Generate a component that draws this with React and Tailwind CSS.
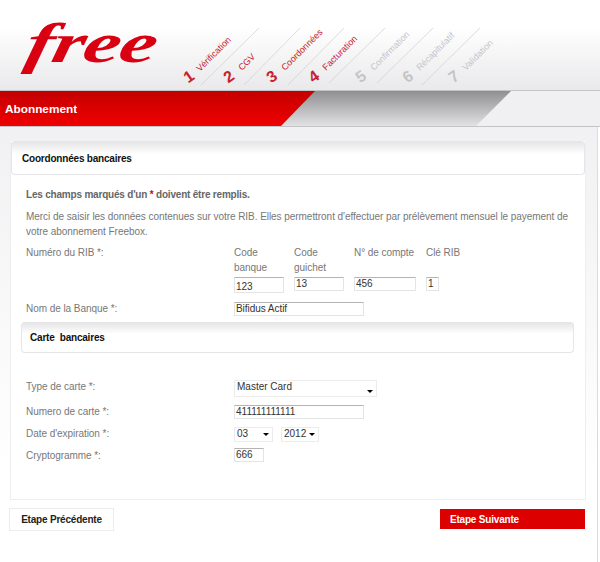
const STEPS = [
  { n: "1", label: "Vérification", x: 192, y: 81, tx: 200, ty: 72, on: true },
  { n: "2", label: "CGV", x: 232, y: 81, tx: 242, ty: 71, on: true },
  { n: "3", label: "Coordonnées", x: 275, y: 81, tx: 285, ty: 71, on: true },
  { n: "4", label: "Facturation", x: 317, y: 81, tx: 326, ty: 71, on: true },
  { n: "5", label: "Confirmation", x: 364, y: 81, tx: 374, ty: 71, on: false },
  { n: "6", label: "Récapitulatif", x: 411, y: 81, tx: 420, ty: 71, on: false },
  { n: "7", label: "Validation", x: 457, y: 81, tx: 466, ty: 71, on: false },
];

const LINES = [[201, 85, 259, 28], [244, 85, 300, 28], [288, 85, 344, 28], [329, 83, 385, 28], [377, 83, 433, 28], [422, 85, 480, 28]];

function Header() {
  return (
    <div className="relative h-[90px] bg-gradient-to-b from-white from-30% to-[#e9e9eb]">
      {/* logo */}
      <span className="absolute left-[27px] top-[13px] font-['Liberation_Serif',serif] text-[56px] leading-[60px] font-bold italic tracking-[-1px] text-[#d90011] [transform:skewX(-12deg)_scaleX(1.5)] origin-left">
        free
      </span>
      {/* steps */}
      <svg className="absolute inset-0" width="600" height="90">
        {LINES.map((l, i) => (
          <line key={i} x1={l[0]} y1={l[1]} x2={l[2]} y2={l[3]} stroke="#cfcfd2" strokeWidth="0.7" />
        ))}
        {STEPS.map((s) => (
          <g key={s.n} fontFamily="'Liberation Sans', sans-serif" fill={s.on ? "#c8202c" : "#c4c4c8"}>
            <text x={s.x} y={s.y} fontSize="16" fontWeight="bold" textAnchor="middle" transform={`rotate(-35 ${s.x} ${s.y})`}>{s.n}</text>
            <text x={s.tx} y={s.ty} fontSize="9" transform={`rotate(-45 ${s.tx} ${s.ty})`}>{s.label}</text>
          </g>
        ))}
      </svg>
    </div>
  );
}

function Banner() {
  return (
    <div className="relative h-[37px] bg-[#f0f0f2] border-y border-[#c4c4c4]">
      <svg className="absolute inset-0" width="600" height="37">
        <defs>
          <linearGradient id="red" x1="0" y1="0" x2="0" y2="1">
            <stop offset="0" stopColor="#c40000" />
            <stop offset="1" stopColor="#f00000" />
          </linearGradient>
          <linearGradient id="grey" x1="0" y1="0" x2="0" y2="1">
            <stop offset="0" stopColor="#8f8f91" />
            <stop offset="1" stopColor="#e2e2e4" />
          </linearGradient>
        </defs>
        <polygon points="0,0 511,0 476,35 0,35" fill="url(#grey)" />
        <polygon points="0,0 315,0 281,35 0,35" fill="url(#red)" />
      </svg>
      <span className="absolute left-[5px] top-[11px] text-[11.8px] leading-[14px] font-bold text-white">Abonnement</span>
    </div>
  );
}

function SectionHead({ children, className }) {
  return (
    <div className={`rounded-[4px] border border-[#e6e6e8] border-t-0 bg-gradient-to-b from-[#e4e4e6] via-white via-40% to-white text-[10px] tracking-[-0.2px] font-bold text-[#111] ${className}`}>
      {children}
    </div>
  );
}

function Field({ value, className }) {
  return (
    <div className={`border border-[#e4e4e4] border-t-[#b4b4b4] bg-white px-[1px] text-[10px] leading-[12px] text-[#333] ${className}`}>
      {value}
    </div>
  );
}

function Select({ value, className, arrow = "mt-[3px]" }) {
  return (
    <div className={`flex justify-between border border-[#ececec] bg-white pl-[2px] pr-[3px] text-[10px] leading-[12px] text-[#333] ${className}`}>
      <span>{value}</span>
      <span className={`h-0 border-x-[3px] border-t-[3px] border-x-transparent border-t-black ${arrow}`} />
    </div>
  );
}

function Row({ label, className, labelClass = "-mt-[1px]", children }) {
  return (
    <div className={`flex ${className}`}>
      <div className={`w-[208px] shrink-0 text-[10px] tracking-[-0.05px] text-[#777] ${labelClass}`}>{label}</div>
      {children}
    </div>
  );
}

export default function App() {
  return (
    <div className="w-[600px] h-[562px] overflow-hidden bg-white font-['Liberation_Sans',sans-serif]">
      <Header />
      <Banner />
      <div className="mr-[2px] border-r border-[#dcdcdc] bg-gradient-to-b from-[#f1f1f3] to-white to-80% pl-[10px] pr-[12px] pt-[14px] pb-[31px]">
        <div className="h-[359px] w-[576px] border border-[#eeeeee] border-t-0 bg-white">
          <SectionHead className="h-[34px] pl-[10px] pt-[10px]">Coordonnées bancaires</SectionHead>

          <div className="px-[15px] text-[10px] tracking-[-0.05px] text-[#777]">
            <p className="mt-[14px] tracking-[-0.2px] font-bold text-[#666] leading-[12px]">
              Les champs marqués d'un <span className="text-[#e00000]">*</span> doivent être remplis.
            </p>
            <p className="mt-[8px] leading-[15px]">
              Merci de saisir les données contenues sur votre RIB. Elles permettront d'effectuer par prélèvement mensuel le payement de votre abonnement Freebox.
            </p>

            <Row label="Numéro du RIB *:" labelClass="mt-0" className="mt-[6px]">
              <div className="flex flex-col">
                <div className="flex h-[30px] leading-[15px]">
                  <span className="w-[60px]">Code<br />banque</span>
                  <span className="w-[60px]">Code<br />guichet</span>
                  <span className="w-[72px]">N° de compte</span>
                  <span>Clé RIB</span>
                </div>
                <div className="mt-[2px] flex items-start">
                  <Field value="123" className="mr-[10px] h-[16px] w-[50px] pt-[3px]" />
                  <Field value="13" className="mr-[10px] h-[14px] w-[50px]" />
                  <Field value="456" className="mr-[10px] h-[14px] w-[62px]" />
                  <Field value="1" className="h-[14px] w-[13px]" />
                </div>
              </div>
            </Row>

            <Row label="Nom de la Banque *:" className="mt-[9px]">
              <Field value="Bifidus Actif" className="h-[14px] w-[130px]" />
            </Row>
          </div>

          <SectionHead className="ml-[10px] mr-[11px] mt-[6px] h-[31px] pl-[8px] pt-[8px]">Carte&nbsp; bancaires</SectionHead>

          <div className="px-[15px] pt-[27px]">
            <Row label="Type de carte *:">
              <Select value="Master Card" arrow="mt-[9px]" className="h-[17px] w-[143px]" />
            </Row>
            <Row label="Numero de carte *:" className="mt-[8px]">
              <Field value="411111111111" className="h-[14px] w-[130px]" />
            </Row>
            <Row label="Date d'expiration *:" className="mt-[8px]">
              <div className="flex gap-[8px]">
                <Select value="03" arrow="mt-[5px]" className="h-[15px] w-[39px]" />
                <Select value="2012" arrow="mt-[5px]" className="h-[15px] w-[38px]" />
              </div>
            </Row>
            <Row label="Cryptogramme *:" labelClass="mt-0" className="mt-[6px]">
              <Field value="666" className="h-[14px] w-[30px]" />
            </Row>
          </div>
        </div>
        <div className="mt-[8px] flex items-start justify-between">
          <button className="-ml-[1px] h-[23px] w-[105px] border border-[#ececec] bg-white text-[10px] tracking-[-0.2px] font-bold text-[#222]">
            Etape Précédente
          </button>
          <button className="mt-[1px] h-[20px] w-[145px] bg-[#dd0000] pl-[10px] text-left text-[10px] tracking-[-0.2px] font-bold text-white">
            Etape Suivante
          </button>
        </div>
      </div>
    </div>
  );
}
